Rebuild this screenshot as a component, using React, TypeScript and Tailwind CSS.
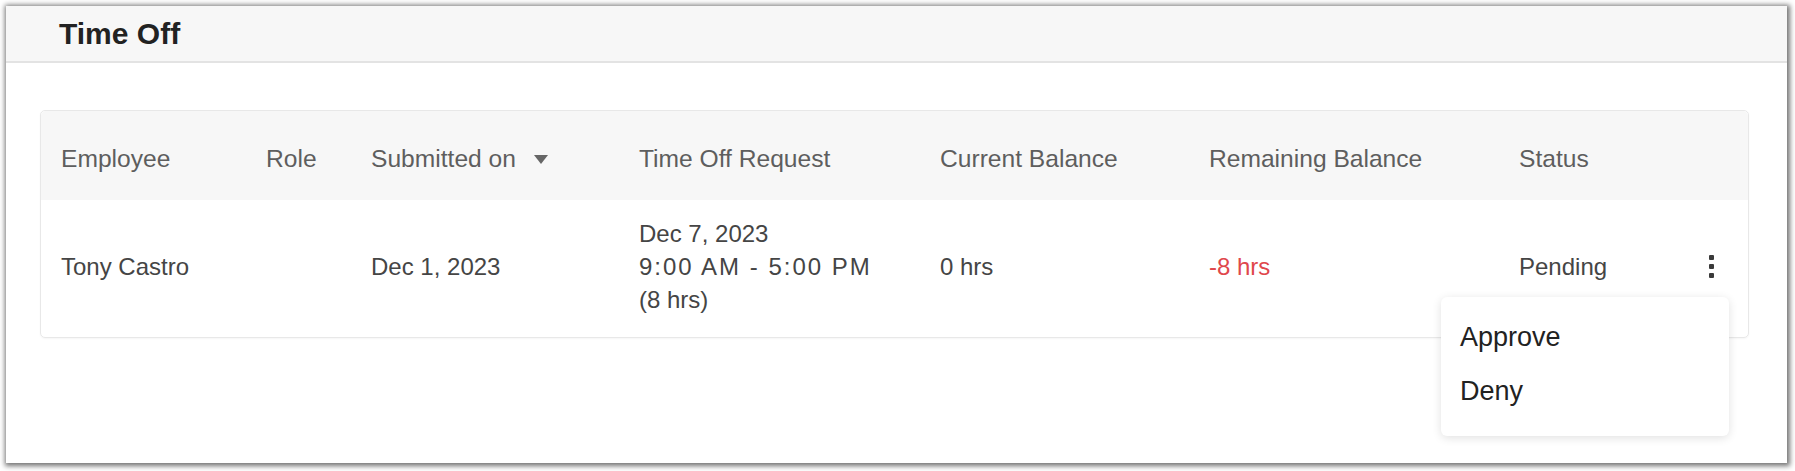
import React from 'react';

const columns = ['Employee', 'Role', 'Submitted on', 'Time Off Request', 'Current Balance', 'Remaining Balance', 'Status'];

function SortCaret() {
  return (
    <svg width="14" height="9" viewBox="0 0 14 9" className="ml-[18px] mt-[1px]">
      <path d="M0 0h14L7 9z" fill="#666" />
    </svg>
  );
}

function Kebab() {
  return (
    <button className="flex flex-col items-center gap-[4px] px-[2px]">
      <span className="block h-[5px] w-[5px] rounded-[1px] bg-[#3a3a3a]" />
      <span className="block h-[5px] w-[5px] rounded-[1px] bg-[#3a3a3a]" />
      <span className="block h-[5px] w-[5px] rounded-[1px] bg-[#3a3a3a]" />
    </button>
  );
}

export default function App() {
  return (
    <div className="h-[471px] w-[1795px] bg-white pt-[6px] pl-[6px] font-['Liberation_Sans',Arial,sans-serif]">
      <div className="h-[457px] w-[1781px] bg-white shadow-[1px_1px_5px_2px_rgba(0,0,0,0.55)]">
        <div className="flex h-[57px] items-center border-b-2 border-[#e3e3e3] bg-[#f7f7f7] pl-[53px]">
          <h1 className="text-[30px] font-bold text-[#222]">Time Off</h1>
        </div>

        <div className="pt-[47px] pl-[34px]">
          <div className="relative w-[1709px] rounded-[5px] border border-[#e8e8e8] shadow-[0_1px_2px_rgba(0,0,0,0.04)]">
            <div className="grid h-[89px] grid-cols-[205px_105px_268px_301px_269px_310px_1fr] items-center rounded-t-[5px] bg-[#f7f7f7] pt-[8px] pl-[20px] text-[24.6px] text-[#5e5e5e]">
              {columns.map((c) => (
                <div key={c} className="flex items-center">
                  {c}
                  {c === 'Submitted on' && <SortCaret />}
                </div>
              ))}
            </div>

            <div className="grid h-[137px] grid-cols-[205px_105px_268px_301px_269px_310px_1fr] items-center pb-[4px] pl-[20px] text-[24px] text-[#454545]">
              <div>Tony Castro</div>
              <div></div>
              <div>Dec 1, 2023</div>
              <div className="leading-[33px]">
                <div>Dec 7, 2023</div>
                <div className="tracking-[2px]">9:00 AM - 5:00 PM</div>
                <div>(8 hrs)</div>
              </div>
              <div>0 hrs</div>
              <div className="text-[#e0474c]">-8 hrs</div>
              <div className="flex items-center justify-between pr-[32px]">
                <span>Pending</span>
                <Kebab />
              </div>
            </div>

            <div className="absolute top-[186px] left-[1400px] w-[288px] rounded-[6px] bg-white pt-[13px] pb-[18px] shadow-[0_2px_10px_rgba(0,0,0,0.12)]">
              <div className="flex h-[54px] items-center px-[19px] text-[27px] text-[#222]">Approve</div>
              <div className="flex h-[54px] items-center px-[19px] text-[27px] text-[#222]">Deny</div>
            </div>
          </div>
        </div>
      </div>
    </div>
  );
}
